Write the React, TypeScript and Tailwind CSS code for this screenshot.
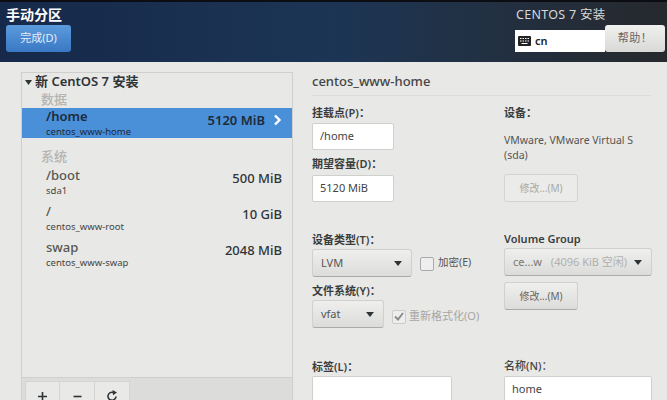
const font = { fontFamily: '"Noto Sans", "Noto Sans CJK SC", sans-serif' };

function Row({ name, sub, size }: { name: string; sub: string; size: string }) {
  return (
    <div className="flex items-start justify-between pl-[24px] pr-[10px] pt-[2px] h-[36px] shrink-0">
      <div className="flex flex-col">
        <span className="text-[13px] leading-[16px] font-medium text-[#555753]">{name}</span>
        <span className="text-[9.5px] leading-[15px] text-[#444]">{sub}</span>
      </div>
      <span className="mt-[3px] text-[13px] leading-[16px] font-medium text-[#2e3436]">{size}</span>
    </div>
  );
}

function Label({ children }: { children: React.ReactNode }) {
  return <div className="text-[11px] leading-[14px] font-semibold text-[#3a3d3d] whitespace-nowrap">{children}</div>;
}

function Caret() {
  return (
    <svg width="8" height="5" viewBox="0 0 8 5" className="shrink-0">
      <path d="M0 0h8L4 5z" fill="#2e3436" />
    </svg>
  );
}

function Drop({ w, children }: { w: string; children: React.ReactNode }) {
  return (
    <div className={`${w} h-[28px] rounded-[3px] border border-[#d0d0ce] border-b-[#aaa] bg-gradient-to-b from-[#efefed] to-[#dcdcda] flex items-center justify-between pl-[8px] pr-[9px] text-[11px] text-[#555]`}>
      {children}
      <Caret />
    </div>
  );
}

function Input({ w, children }: { w: string; children?: React.ReactNode }) {
  return (
    <div className={`${w} h-[27px] rounded-[2px] bg-white border border-[#cfcfcd] flex items-center pl-[7px] text-[11px] text-[#444]`}>
      {children}
    </div>
  );
}

export default function App() {
  return (
    <div style={font} className="w-[667px] h-[400px] overflow-hidden flex flex-col bg-[#e8e8e6]">
      <header className="h-[62px] shrink-0 flex justify-between border-t-2 border-[#0b0d12] bg-gradient-to-r from-[#16294a] via-[#1c3555] to-[#26292d]">
        <div className="pl-[6px] pt-[4px] flex flex-col">
          <div className="text-[14px] leading-[18px] font-semibold text-white whitespace-nowrap">手动分区</div>
          <div className="mt-[1px] w-[65px] h-[27px] rounded-[3px] bg-gradient-to-b from-[#5b9bdc] to-[#3a78c4] flex items-center justify-center text-[11px] text-[#e6eef8]">
            完成(D)
          </div>
        </div>
        <div className="flex flex-col items-start w-[152px] pt-[5px]">
          <div className="pl-[1px] text-[12.5px] leading-[16px] text-[#d8d8d8] tracking-[0.3px] whitespace-nowrap">CENTOS 7 安装</div>
          <div className="mt-[7px] flex items-start w-full">
            <div className="w-[90px] h-[22px] bg-white flex items-center pl-[3px] gap-[4px]">
              <svg width="13" height="10" viewBox="0 0 13 10">
                <rect width="13" height="10" rx="1" fill="#222" />
                <path d="M2 2.5h1.5M4.5 2.5H6M7 2.5h1.5M9.5 2.5H11M2 5h1.5M4.5 5H6M7 5h1.5M9.5 5H11M3.5 7.5h6" stroke="#fff" strokeWidth="1" />
              </svg>
              <span className="text-[11px] font-semibold text-[#222]">cn</span>
            </div>
            <div className="w-[60px] h-[27px] -mt-[5px] rounded-[3px] bg-gradient-to-b from-[#f0f0ee] to-[#d8d8d6] flex items-center justify-center text-[11px] text-[#666] tracking-[0.5px]">
              帮助！
            </div>
          </div>
        </div>
      </header>

      <main className="flex-1 flex pl-[21px] pt-[10px] min-h-0">
        <section className="w-[272px] h-full shrink-0 border border-b-0 border-[#cfcfcd] flex flex-col overflow-hidden">
          <div className="h-[304px] shrink-0 flex flex-col">
            <div className="flex items-center gap-[3px] pl-[3px] h-[18px] shrink-0">
              <svg width="7" height="5" viewBox="0 0 7 5"><path d="M0 0h7L3.5 5z" fill="#2e3436" /></svg>
              <span className="text-[13px] font-semibold text-[#2e3436] whitespace-nowrap">新 CentOS 7 安装</span>
            </div>
            <div className="pl-[19px] h-[17px] shrink-0 text-[13px] leading-[17px] font-medium text-[#b4b4b2]">数据</div>
            <div className="h-[30px] shrink-0 bg-[#4a90d9] flex items-start justify-between pl-[24px] pr-[10px] pt-[1px]">
              <div className="flex flex-col">
                <span className="text-[13px] leading-[15px] font-semibold text-[#1d2a3a]">/home</span>
                <span className="mt-[1px] text-[9.5px] leading-[14px] text-[#1d2a3a]">centos_www-home</span>
              </div>
              <div className="flex items-center gap-[8px] mt-[3px]">
                <span className="text-[13px] leading-[16px] font-semibold text-[#1d2a3a]">5120 MiB</span>
                <svg width="9" height="12" viewBox="0 0 9 12"><path d="M2 1.5L6.5 6L2 10.5" stroke="#fff" strokeWidth="2.4" fill="none" /></svg>
              </div>
            </div>
            <div className="pl-[19px] pt-[10px] h-[27px] shrink-0 text-[13px] leading-[17px] font-medium text-[#b4b4b2]">系统</div>
            <Row name="/boot" sub="sda1" size="500 MiB" />
            <Row name="/" sub="centos_www-root" size="10 GiB" />
            <Row name="swap" sub="centos_www-swap" size="2048 MiB" />
          </div>
          <div className="flex-1 border-t border-[#cfcfcd] bg-[#dcdcda] pl-[3px] pt-[3px] flex items-start">
            <div className="w-[35px] h-[30px] bg-[#e9e9e7] border border-[#d4d4d2] flex items-center justify-center">
              <svg width="11" height="11" viewBox="0 0 11 11"><path d="M5.5 1v9M1 5.5h9" stroke="#2e3436" strokeWidth="1.6" /></svg>
            </div>
            <div className="w-[35px] h-[30px] bg-[#e9e9e7] border-y border-r border-[#d4d4d2] flex items-center justify-center">
              <svg width="9" height="11" viewBox="0 0 9 11"><path d="M0.5 5.5h8" stroke="#2e3436" strokeWidth="1.6" /></svg>
            </div>
            <div className="w-[35px] h-[30px] bg-[#e9e9e7] border-y border-r border-[#d4d4d2] flex items-center justify-center">
              <svg width="12" height="12" viewBox="0 0 12 12"><path d="M10 6.5A4 4 0 1 1 7.5 2.5" stroke="#2e3436" strokeWidth="1.6" fill="none" /><path d="M6.5 0L11 2.6 7 5.2z" fill="#2e3436" /></svg>
            </div>
          </div>
        </section>

        <section className="pl-[19px] w-[374px] shrink-0">
          <div className="text-[13px] leading-[18px] font-medium text-[#444] border-b border-[#dcdcda] w-[339px] h-[24px]">centos_www-home</div>
          <div className="flex mt-[10px]">
            <div className="w-[192px] shrink-0">
              <Label>挂载点(P)：</Label>
              <div className="mt-[3px]"><Input w="w-[82px]">/home</Input></div>
              <div className="mt-[7px]"><Label>期望容量(D)：</Label></div>
              <div className="mt-[4px]"><Input w="w-[82px]">5120 MiB</Input></div>
              <div className="mt-[31px]"><Label>设备类型(T)：</Label></div>
              <div className="mt-[2px] flex items-center gap-[8px]">
                <Drop w="w-[100px]">LVM</Drop>
                <span className="w-[14px] h-[14px] mt-[2px] rounded-[2px] border border-[#aaa] bg-[#eee]" />
                <span className="-ml-[4px] text-[10.5px] text-[#555] whitespace-nowrap">加密(E)</span>
              </div>
              <div className="mt-[7px]"><Label>文件系统(Y)：</Label></div>
              <div className="mt-[2px] flex items-center gap-[8px]">
                <Drop w="w-[72px]">vfat</Drop>
                <span className="w-[14px] h-[14px] mt-[5px] rounded-[2px] border border-[#ccc] bg-[#eee] flex items-center justify-center">
                  <svg width="10" height="9" viewBox="0 0 10 9"><path d="M1 4.5L4 7.5L9 1" stroke="#8a8a88" strokeWidth="2" fill="none" /></svg>
                </span>
                <span className="-ml-[5px] mt-[5px] text-[11px] text-[#a6a6a4] whitespace-nowrap">重新格式化(O)</span>
              </div>
              <div className="mt-[32px]"><Label>标签(L)：</Label></div>
              <div className="mt-[2px]"><Input w="w-[140px]" /></div>
            </div>
            <div className="w-[148px] shrink-0">
              <Label>设备：</Label>
              <div className="mt-[13px] text-[10.5px] leading-[15px] text-[#555] whitespace-nowrap">VMware, VMware Virtual S<br />(sda)</div>
              <div className="mt-[11px] w-[74px] h-[28px] rounded-[3px] border border-[#d4d4d2] bg-[#ebebe9] flex items-center justify-center text-[10px] text-[#a8a8a6]">修改...(M)</div>
              <div className="mt-[30px]"><Label>Volume Group</Label></div>
              <div className="mt-[2px]">
                <Drop w="w-[148px]">
                  <span className="whitespace-nowrap text-[#777]">ce...w <span className="pl-[6px] text-[#b0b0ae]">(4096 KiB 空闲)</span></span>
                </Drop>
              </div>
              <div className="mt-[6px] w-[74px] h-[28px] rounded-[3px] border border-[#d0d0ce] border-b-[#aaa] bg-gradient-to-b from-[#efefed] to-[#dcdcda] flex items-center justify-center text-[10px] text-[#666]">修改...(M)</div>
              <div className="mt-[49px] text-[11px] leading-[14px] font-medium text-[#444]">名称(N)：</div>
              <div className="mt-[3px]"><Input w="w-[148px]">home</Input></div>
            </div>
          </div>
        </section>
      </main>
    </div>
  );
}
